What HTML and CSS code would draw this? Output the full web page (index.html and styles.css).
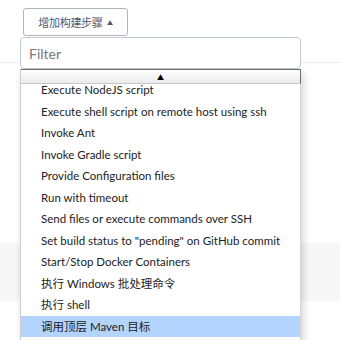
FILE: index.html
```html
<!DOCTYPE html>
<html lang="zh">
<head>
    <meta charset="UTF-8">
    <title>增加构建步骤</title>
    <link rel="stylesheet" href="styles.css">
</head>
<body>

    <main class="page">
        <div class="toolbar">
            <button class="add-step">增加构建步骤 <span class="caret">&#9650;</span></button>
        </div>
        <div class="section-rule"></div>
        <div class="section-band"></div>
    </main>

    <div class="step-menu">
        <input class="step-filter" type="text" placeholder="Filter">
        <div class="step-list">
            <div class="scroll-up"><span>&#9650;</span></div>
            <div class="step-viewport">
                <ul class="step-items">
                    <li>Execute NodeJS script</li>
                    <li>Execute shell script on remote host using ssh</li>
                    <li>Invoke Ant</li>
                    <li>Invoke Gradle script</li>
                    <li>Provide Configuration files</li>
                    <li>Run with timeout</li>
                    <li>Send files or execute commands over SSH</li>
                    <li>Set build status to "pending" on GitHub commit</li>
                    <li>Start/Stop Docker Containers</li>
                    <li>执行 Windows 批处理命令</li>
                    <li>执行 shell</li>
                    <li class="active">调用顶层 Maven 目标</li>
                </ul>
            </div>
        </div>
    </div>

</body>
</html>
```

FILE: styles.css
```css
:root {
    --text: #333;
    --muted: #4b5873;
    --border: #c3c9d2;
    --hover: #b3d4ff;
    --font-main: Lato, 'Noto Sans CJK SC', sans-serif;
}

html, body {
    margin: 0;
    height: 100%;
    background: #fff;
    font-family: var(--font-main);
    color: var(--text);
    overflow: hidden;
}

.page {
    padding-top: 8px;
}

.toolbar {
    padding-left: 23px;
}

.add-step {
    width: 105px;
    height: 28px;
    padding: 0;
    border: 1px solid #aeb6c2;
    border-radius: 3px;
    background: #fff;
    color: var(--muted);
    font-family: var(--font-main);
    font-size: 11px;
    letter-spacing: -0.3px;
}

.caret {
    font-size: 6px;
    vertical-align: 2px;
    margin-left: 2px;
}

.section-rule {
    height: 26px;
    border-bottom: 1px solid #ececec;
}

.section-band {
    margin-top: 180px;
    height: 58px;
    background: #f7f7f8;
}

.step-menu {
    position: absolute;
    left: 20px;
    top: 37px;
    width: 281px;
}

.step-filter {
    display: block;
    box-sizing: border-box;
    width: 100%;
    height: 32px;
    margin: 0;
    padding: 0 8px;
    border: 1px solid var(--border);
    border-radius: 4px;
    font-family: var(--font-main);
    font-size: 14px;
    outline: none;
}

.step-filter::placeholder {
    color: #777;
}

.step-list {
    background: #fff;
    border-left: 1px solid #cfcfcf;
    border-right: 1px solid #d5d5d5;
    box-shadow: 2px 4px 8px rgba(0, 0, 0, 0.18);
}

.scroll-up {
    height: 13px;
    border-top: 1px solid #6e6e6e;
    border-right: 1px solid #6e6e6e;
    border-bottom: 1px solid #c8c8c8;
    margin-right: -1px;
    background: linear-gradient(#fff, #ebebeb);
    display: flex;
    justify-content: center;
    align-items: center;
    font-size: 7px;
    color: #000;
}

.step-viewport {
    height: 257px;
    overflow: hidden;
}

.step-items {
    list-style: none;
    margin: -5px 0 0;
    padding: 0;
}

.step-items li {
    height: 21.5px;
    line-height: 22.5px;
    padding-left: 20px;
    font-size: 11.5px;
    white-space: nowrap;
    color: #222;
}

.step-items li.active {
    background: var(--hover);
}
```
